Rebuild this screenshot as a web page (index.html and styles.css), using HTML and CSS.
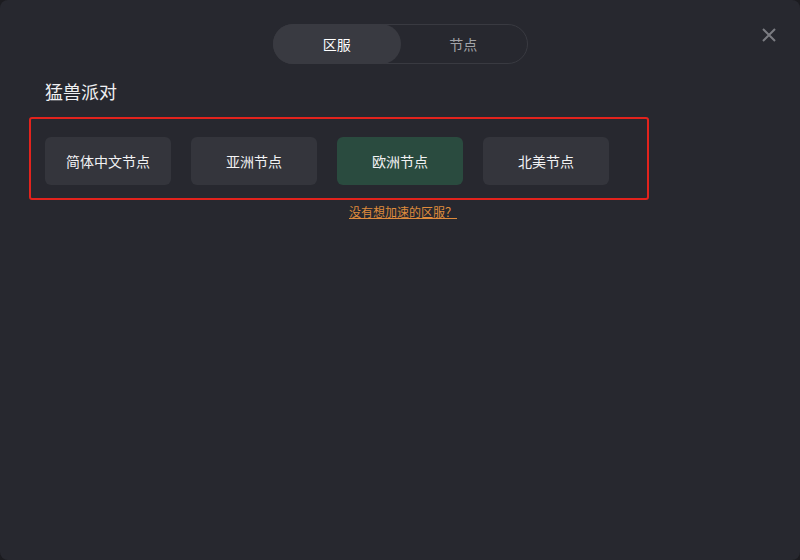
FILE: index.html
```html
<!DOCTYPE html>
<html>
<head>
    <title>区服选择</title>
    <link rel="stylesheet" href="styles.css">
</head>
<body>
    <div class="dialog">
        <div class="top">
            <div class="tabs">
                <div class="tab active">区服</div>
                <div class="tab">节点</div>
            </div>
            <span class="close">
                <svg width="16" height="16" viewBox="0 0 16 16">
                    <path d="M2 2 L14 14 M14 2 L2 14" stroke="#7b7c82" stroke-width="2" fill="none"/>
                </svg>
            </span>
        </div>
        <h2 class="game">猛兽派对</h2>
        <div class="regions">
            <div class="region">简体中文节点</div>
            <div class="region">亚洲节点</div>
            <div class="region selected">欧洲节点</div>
            <div class="region">北美节点</div>
        </div>
        <div class="more">
            <a href="#">没有想加速的区服？</a>
        </div>
    </div>
</body>
</html>
```

FILE: styles.css
```css
body {
    margin: 0;
    background: #1c1c20;
    font-family: "Noto Sans CJK SC", "Noto Sans", sans-serif;
}

.dialog {
    width: 800px;
    height: 560px;
    box-sizing: border-box;
    background: #27282f;
    border-radius: 8px;
    padding: 24px 0 0 29px;
    position: relative;
}

.top {
    display: flex;
    justify-content: center;
    margin-left: -29px;
}

.tabs {
    display: flex;
    width: 255px;
    height: 40px;
    box-sizing: border-box;
    border: 1px solid #393a41;
    border-radius: 20px;
}

.tab {
    flex: 1;
    display: flex;
    justify-content: center;
    align-items: center;
    color: #a3a4a8;
    font-size: 14px;
    border-radius: 20px;
    margin: -1px;
}

.tab.active {
    background: #393a41;
    color: #ffffff;
}

.close {
    position: absolute;
    top: 24px;
    right: 23px;
}

.game {
    margin: 15px 0 0 16px;
    font-size: 18px;
    font-weight: normal;
    color: #f0f0f2;
    line-height: 24px;
}

.regions {
    display: flex;
    gap: 20px;
    width: 620px;
    height: 83px;
    box-sizing: border-box;
    margin-top: 14px;
    padding: 18px 14px 0;
    border: 2px solid #e2231d;
    border-radius: 3px;
}

.region {
    width: 126px;
    height: 48px;
    display: flex;
    justify-content: center;
    align-items: center;
    background: #34353c;
    border-radius: 6px;
    color: #f2f2f4;
    font-size: 14px;
}

.region.selected {
    background: #2a4b3f;
}

.more {
    text-align: center;
    margin: 3px 0 0 -23px;
    font-size: 12px;
}

.more a {
    color: #df8b3c;
    text-decoration: underline;
}
```
